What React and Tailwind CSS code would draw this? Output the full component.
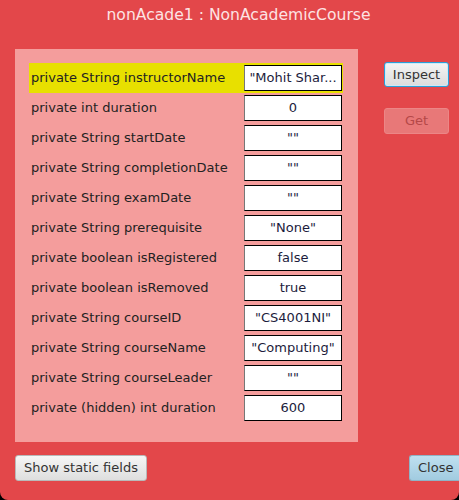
const fields = [
  { label: 'private String instructorName', value: '"Mohit Shar...', selected: true },
  { label: 'private int duration', value: '0' },
  { label: 'private String startDate', value: '""' },
  { label: 'private String completionDate', value: '""' },
  { label: 'private String examDate', value: '""' },
  { label: 'private String prerequisite', value: '"None"' },
  { label: 'private boolean isRegistered', value: 'false' },
  { label: 'private boolean isRemoved', value: 'true' },
  { label: 'private String courseID', value: '"CS4001NI"' },
  { label: 'private String courseName', value: '"Computing"' },
  { label: 'private String courseLeader', value: '""' },
  { label: 'private (hidden) int duration', value: '600' },
];

const FieldRow = ({ label, value, selected }) => (
  <div className={`flex items-center justify-between h-[30px] pl-[2px] pr-[1px] ${selected ? 'bg-[#e8e000]' : ''}`}>
    <span className="text-[13px] text-[#222]">{label}</span>
    <div className="w-[98px] h-[26px] bg-white border border-black border-l-[#777] flex items-center justify-center text-[13px] text-[#1c1c3c] whitespace-nowrap overflow-hidden">
      {value}
    </div>
  </div>
);

const App = () => {
  return (
    <div className="w-[459px] h-[500px] bg-black" style={{ fontFamily: '"DejaVu Sans", sans-serif' }}>
      <div className="w-full h-full bg-[#e3474a] rounded-b-[8px] flex flex-col">
        <div className="h-[30px] flex items-center justify-center pt-[1px] pl-[18px] text-[15.6px] text-[#fde3e3]">
          nonAcade1 : NonAcademicCourse
        </div>
        <div className="flex mt-[19px]">
          <div className="ml-[15px] w-[343px] h-[393px] bg-[#f49d9c] pt-[14px] pl-[14px]">
            <div className="w-[314px] flex flex-col">
              {fields.map((f) => (
                <FieldRow key={f.label} {...f} />
              ))}
            </div>
          </div>
          <div className="ml-[26px] pt-[13px] flex flex-col gap-[21px]">
            <button className="w-[65px] h-[25px] rounded-[3px] border border-[#2a9fd8] bg-gradient-to-b from-[#f4f4f4] to-[#dcdcdc] text-[13px] text-[#333] shadow-[inset_0_0_0_1px_#cfe9f7]">
              Inspect
            </button>
            <button className="w-[65px] h-[26px] rounded-[3px] border border-[#ec8686] bg-[#e87878] text-[13px] text-[#b54848]">
              Get
            </button>
          </div>
        </div>
        <div className="flex justify-between mt-[13px]">
          <button className="ml-[15px] w-[132px] h-[26px] rounded-[3px] border border-[#b9b9b9] bg-gradient-to-b from-[#f6f6f6] to-[#dedede] text-[13px] text-[#333]">
            Show static fields
          </button>
          <button className="w-[50px] h-[26px] rounded-l-[3px] border border-r-0 border-[#8fb3c6] bg-gradient-to-b from-[#bfe0f0] to-[#a1cbe0] text-[13px] text-[#333] pl-[8px] text-left">
            Close
          </button>
        </div>
      </div>
    </div>
  );
};

export default App;
